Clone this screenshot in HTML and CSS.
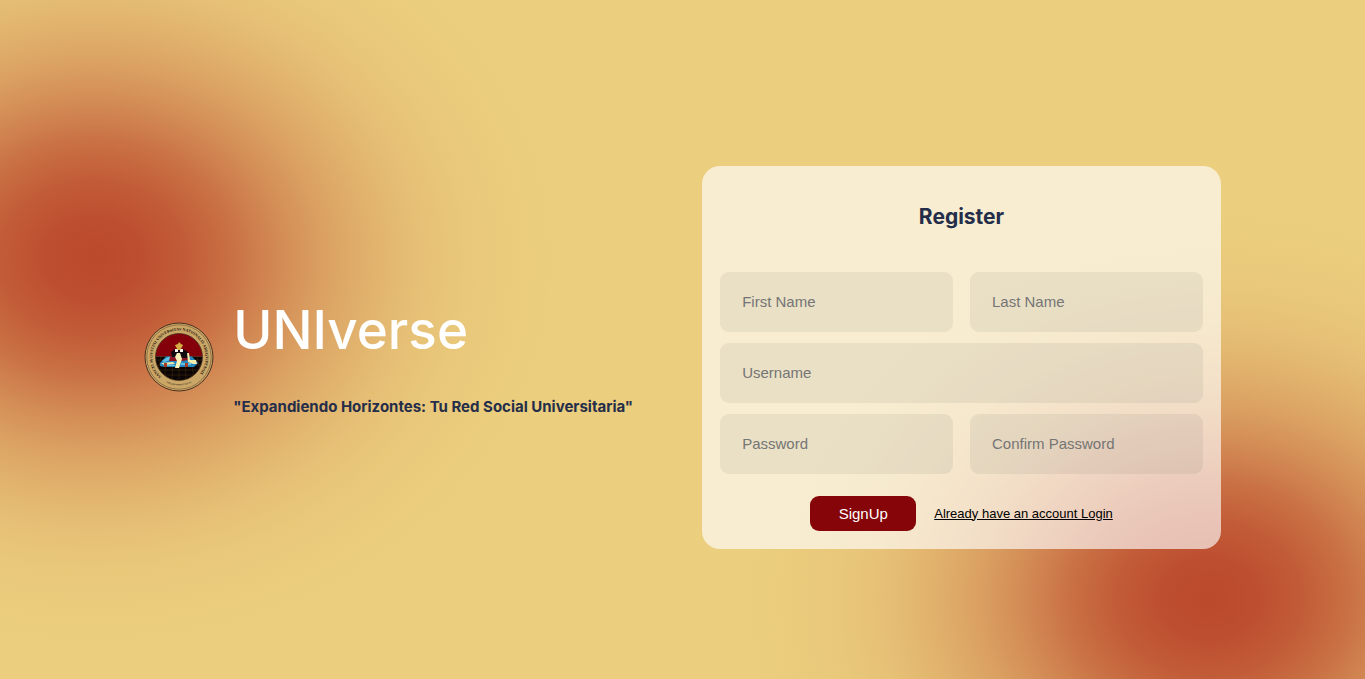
FILE: index.html
```
<!DOCTYPE html>
<html lang="en">
<head>
<meta charset="utf-8">
<meta name="viewport" content="width=device-width, initial-scale=1">
<title>UNIverse</title>
<link rel="stylesheet" href="styles.css">
</head>
<body>
<main class="page">
  <section class="brand">
    <svg class="brand-logo" viewBox="0 0 70 70" aria-hidden="true">
      <defs>
        <clipPath id="disc"><circle cx="35" cy="35" r="23.5"/></clipPath>
        <path id="ring" d="M17.2 54.8 A26.6 26.6 0 1 1 52.8 54.8"/>
        <path id="ring-low" d="M19 58.5 A28.5 28.5 0 0 0 51 58.5"/>
      </defs>
      <circle cx="35" cy="35" r="34" fill="#cba767" stroke="#4a3220" stroke-width="1"/>
      <circle cx="35" cy="35" r="32.2" fill="none" stroke="#6b4f2c" stroke-width=".6"/>
      <g clip-path="url(#disc)">
        <rect x="11" y="11" width="48" height="23.5" fill="#84000b"/>
        <rect x="11" y="34.5" width="48" height="25" fill="#0a0504"/>
        <path d="M11 38H59M11 43H59M11 48H59M11 53H59M17 34L12 59M23 34L20 59M29 34L28 59M35 34V59M41 34L42 59M47 34L50 59M53 34L58 59" stroke="#55380f" stroke-width=".4"/>
        <path d="M16 41L22 34.500H48L54 41L50 45H20L16 44Z" fill="#2387bd"/>
        <path d="M18 39L24 35H28L26 38L20 40Z" fill="#63c2e4"/>
        <path d="M17 41L29 40L31 42L20 43Z" fill="#f1e9ad"/>
        <path d="M26 35L29 33H45L45 38L38 39H25Z" fill="#8c1622"/>
        <path d="M27 30L31 27H39L44 30L45 36L38 36L33 35L28 35Z" fill="#120c12"/>
        <path d="M43 31H45L46 38L52 38L53 42L49 42L44 40Z" fill="#f3ecaf"/>
        <path d="M33 31L36 31L38 37L35 46H31L33 39L31 35Z" fill="#f8f2b9"/>
        <path d="M37 41H47V43H37ZM23 43H31V44H23Z" fill="#63c2e4"/>
        <path d="M20 41h3v4h-3zM41 41h3v4h-3z" fill="#a53b25"/>
        <path d="M31 27h3v3h-3zM36 27h3v3h-3z" fill="#f8f4e7"/>
        <path d="M31 23L34 22L35 20L37 22L39 23L38 25L36 28H34L32 25Z" fill="#d6ac43"/>
      </g>
      <circle cx="35" cy="35" r="23.5" fill="none" stroke="#4a3220" stroke-width=".8"/>
      <text class="seal-text"><textPath href="#ring">SANCTI AVGVSTINI VNIVERSITAS NATIONALIS AREQVIPENSIS</textPath></text>
      <text class="seal-text seal-small" text-anchor="middle"><textPath href="#ring-low" startOffset="50%">AREQVIPA MDCCCXXVIII</textPath></text>
    </svg>
    <div class="brand-copy">
      <h1 class="brand-name">UNIverse</h1>
      <p class="brand-tagline">"Expandiendo Horizontes: Tu Red Social Universitaria"</p>
    </div>
  </section>
  <form class="card">
    <h2 class="card-title">Register</h2>
    <div class="fields">
      <input class="field" type="text" placeholder="First Name" aria-label="First Name">
      <input class="field" type="text" placeholder="Last Name" aria-label="Last Name">
      <input class="field field-wide" type="text" placeholder="Username" aria-label="Username">
      <input class="field" type="password" placeholder="Password" aria-label="Password">
      <input class="field" type="password" placeholder="Confirm Password" aria-label="Confirm Password">
    </div>
    <div class="actions">
      <button class="submit" type="submit">SignUp</button>
      <a class="login-link" href="#login">Already have an account Login</a>
    </div>
  </form>
</main>
</body>
</html>
```
FILE: styles.css
```
* { box-sizing: border-box; }

body {
  margin: 0;
  font-family: Inter, sans-serif;
  color: #242d49;
  background-color: #ebce7e;
}

.page {
  min-height: 100vh;
  padding-top: 35px;
  display: flex;
  align-items: center;
  justify-content: center;
  gap: 69px;
  background-image:
    radial-gradient(34% 57% at 6.8% 38%,
      rgb(187 73 44) 0%, rgb(187 73 44 / .96) 10%, rgb(187 73 44 / .86) 20%,
      rgb(187 73 44 / .7) 30%, rgb(187 73 44 / .51) 40%, rgb(187 73 44 / .34) 50%,
      rgb(187 73 44 / .21) 60%, rgb(187 73 44 / .11) 70%, rgb(187 73 44 / .05) 80%,
      rgb(187 73 44 / .02) 90%, rgb(187 73 44 / 0) 100%),
    radial-gradient(34% 57% at 88.6% 88.2%,
      rgb(187 73 44) 0%, rgb(187 73 44 / .96) 10%, rgb(187 73 44 / .86) 20%,
      rgb(187 73 44 / .7) 30%, rgb(187 73 44 / .51) 40%, rgb(187 73 44 / .34) 50%,
      rgb(187 73 44 / .21) 60%, rgb(187 73 44 / .11) 70%, rgb(187 73 44 / .05) 80%,
      rgb(187 73 44 / .02) 90%, rgb(187 73 44 / 0) 100%);
}

.brand {
  display: flex;
  align-items: center;
  gap: 19px;
}

.brand-logo {
  flex: none;
  width: 70px;
  height: 70px;
}

.seal-text {
  font-family: "Liberation Serif", serif;
  font-size: 4px;
  font-weight: 700;
  fill: #1d1208;
}

.seal-small { font-size: 2px; }

.brand-name {
  margin: 0 0 36px;
  font-size: 53px;
  line-height: 64px;
  font-weight: 500;
  color: #fff;
}

.brand-tagline {
  margin: 0;
  font-size: 15px;
  line-height: 18px;
  font-weight: 700;
}

.card {
  width: 38%;
  padding: 18px;
  border-radius: 18px;
  background: rgb(255 255 255 / .64);
}

.card-title {
  margin: 20px 0 43px;
  font-size: 21px;
  line-height: 25px;
  font-weight: 700;
  text-align: center;
}

.fields {
  display: grid;
  grid-template-columns: 1fr 1fr;
  gap: 11px 17px;
}

.field {
  width: 100%;
  min-width: 0;
  height: 60px;
  padding: 0 22px;
  border: 0;
  border-radius: 9px;
  outline: 0;
  font: 15px "Liberation Sans", Arial, sans-serif;
  background: rgb(40 52 62 / .07);
}

.field::placeholder { color: #757575; }

.field-wide { grid-column: 1 / -1; }

.actions {
  margin-top: 22px;
  display: flex;
  align-items: center;
  justify-content: center;
  gap: 18px;
  font-family: "Liberation Sans", Arial, sans-serif;
}

.submit {
  width: 106px;
  height: 35px;
  padding: 0;
  border: 0;
  border-radius: 9px;
  font: 15px "Liberation Sans", Arial, sans-serif;
  color: #fff;
  background: #850508;
}

.login-link {
  font-size: 13px;
  color: #000;
}
```
